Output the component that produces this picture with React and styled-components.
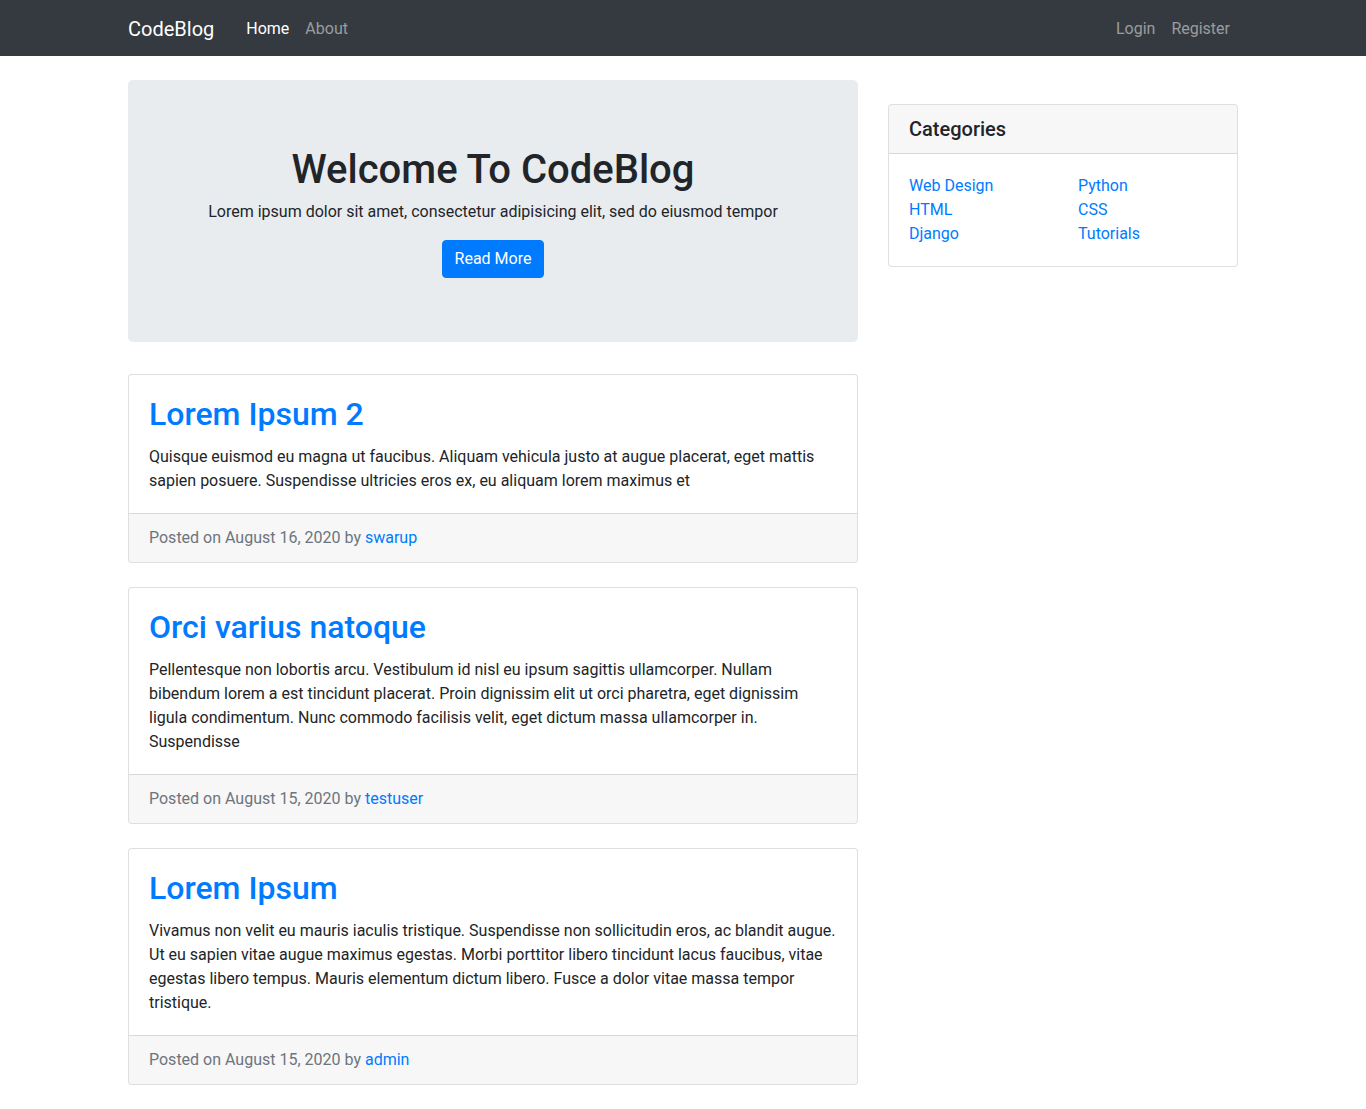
import styled, { createGlobalStyle } from "styled-components";

const GlobalStyle = createGlobalStyle`
  * {
    box-sizing: border-box;
  }
  body {
    margin: 0;
    font-family: "Segoe UI", Roboto, "Liberation Sans", Arial, sans-serif;
    font-size: 16px;
    line-height: 1.5;
    color: #212529;
    background-color: #ffffff;
  }
  a {
    color: #007bff;
    text-decoration: none;
  }
`;

const Navbar = styled.nav`
  height: 56px;
  background-color: #343a40;
  display: flex;
  align-items: center;
`;

const Container = styled.div`
  width: 1140px;
  margin: 0 auto;
  padding: 0 15px;
`;

const NavInner = styled(Container)`
  display: flex;
  align-items: center;
  padding-top: 1px;
`;

const Brand = styled.a`
  font-size: 20px;
  line-height: 30px;
  color: #ffffff;
  margin-right: 24px;
`;

const NavList = styled.div`
  display: flex;
  align-items: center;
  margin-left: ${(p) => (p.$right ? "auto" : "0")};
`;

const NavLink = styled.a`
  padding: 8px;
  color: ${(p) => (p.$active ? "#ffffff" : "rgba(255, 255, 255, 0.5)")};
`;

const Main = styled(Container)`
  margin-top: 24px;
  display: flex;
  gap: 30px;
`;

const LeftCol = styled.div`
  width: 730px;
  flex-shrink: 0;
`;

const RightCol = styled.div`
  width: 350px;
  flex-shrink: 0;
  padding-top: 24px;
`;

const Jumbotron = styled.div`
  background-color: #e9ecef;
  border-radius: 5px;
  padding: 64px 32px;
  margin-bottom: 32px;
  text-align: center;
`;

const JumboTitle = styled.h1`
  margin: 0 0 8px;
  padding-top: 2px;
  height: 48px;
  font-size: 40px;
  font-weight: 500;
  line-height: 1.2;
`;

const JumboText = styled.p`
  margin: 0 0 16px;
`;

const Button = styled.a`
  display: inline-block;
  background-color: #007bff;
  color: #ffffff;
  border: 1px solid #007bff;
  border-radius: 4px;
  padding: 6px 12px;
  line-height: 24px;
`;

const Card = styled.div`
  border: 1px solid rgba(0, 0, 0, 0.125);
  border-radius: 4px;
  margin-bottom: 24px;
  background-color: #ffffff;
  overflow: hidden;
`;

const CardBody = styled.div`
  padding: 20px;
`;

const CardTitle = styled.h2`
  margin: 0 0 12px;
  font-size: 32px;
  font-weight: 500;
  line-height: 38px;
`;

const CardText = styled.p`
  margin: 0;
`;

const CardFooter = styled.div`
  padding: 12px 20px;
  background-color: rgba(0, 0, 0, 0.03);
  border-top: 1px solid rgba(0, 0, 0, 0.125);
  color: #6c757d;
`;

const CardHeader = styled.div`
  padding: 12px 20px;
  background-color: rgba(0, 0, 0, 0.03);
  border-bottom: 1px solid rgba(0, 0, 0, 0.125);
`;

const HeaderTitle = styled.h5`
  margin: 0;
  font-size: 20px;
  font-weight: 500;
  line-height: 24px;
`;

const CategoryGrid = styled.div`
  display: grid;
  grid-template-columns: 169px 1fr;
`;

const CategoryList = styled.ul`
  list-style: none;
  margin: 0;
  padding: 0;
`;

const posts = [
  {
    id: 1,
    title: "Lorem Ipsum 2",
    body: "Quisque euismod eu magna ut faucibus. Aliquam vehicula justo at augue placerat, eget mattis sapien posuere. Suspendisse ultricies eros ex, eu aliquam lorem maximus et",
    date: "August 16, 2020",
    author: "swarup",
  },
  {
    id: 2,
    title: "Orci varius natoque",
    body: "Pellentesque non lobortis arcu. Vestibulum id nisl eu ipsum sagittis ullamcorper. Nullam bibendum lorem a est tincidunt placerat. Proin dignissim elit ut orci pharetra, eget dignissim ligula condimentum. Nunc commodo facilisis velit, eget dictum massa ullamcorper in. Suspendisse",
    date: "August 15, 2020",
    author: "testuser",
  },
  {
    id: 3,
    title: "Lorem Ipsum",
    body: "Vivamus non velit eu mauris iaculis tristique. Suspendisse non sollicitudin eros, ac blandit augue. Ut eu sapien vitae augue maximus egestas. Morbi porttitor libero tincidunt lacus faucibus, vitae egestas libero tempus. Mauris elementum dictum libero. Fusce a dolor vitae massa tempor tristique.",
    date: "August 15, 2020",
    author: "admin",
  },
];

const categories = [
  ["Web Design", "HTML", "Django"],
  ["Python", "CSS", "Tutorials"],
];

const App = () => {
  return (
    <>
      <GlobalStyle />
      <Navbar>
        <NavInner>
          <Brand href="#">CodeBlog</Brand>
          <NavList>
            <NavLink href="#" $active>
              Home
            </NavLink>
            <NavLink href="#">About</NavLink>
          </NavList>
          <NavList $right>
            <NavLink href="#">Login</NavLink>
            <NavLink href="#">Register</NavLink>
          </NavList>
        </NavInner>
      </Navbar>
      <Main>
        <LeftCol>
          <Jumbotron>
            <JumboTitle>Welcome To CodeBlog</JumboTitle>
            <JumboText>
              Lorem ipsum dolor sit amet, consectetur adipisicing elit, sed do
              eiusmod tempor
            </JumboText>
            <Button href="#">Read More</Button>
          </Jumbotron>
          {posts.map((post) => (
            <Card key={post.id}>
              <CardBody>
                <CardTitle>
                  <a href="#">{post.title}</a>
                </CardTitle>
                <CardText>{post.body}</CardText>
              </CardBody>
              <CardFooter>
                Posted on {post.date} by <a href="#">{post.author}</a>
              </CardFooter>
            </Card>
          ))}
        </LeftCol>
        <RightCol>
          <Card>
            <CardHeader>
              <HeaderTitle>Categories</HeaderTitle>
            </CardHeader>
            <CardBody>
              <CategoryGrid>
                {categories.map((col, i) => (
                  <CategoryList key={i}>
                    {col.map((name) => (
                      <li key={name}>
                        <a href="#">{name}</a>
                      </li>
                    ))}
                  </CategoryList>
                ))}
              </CategoryGrid>
            </CardBody>
          </Card>
        </RightCol>
      </Main>
    </>
  );
};

export default App;
